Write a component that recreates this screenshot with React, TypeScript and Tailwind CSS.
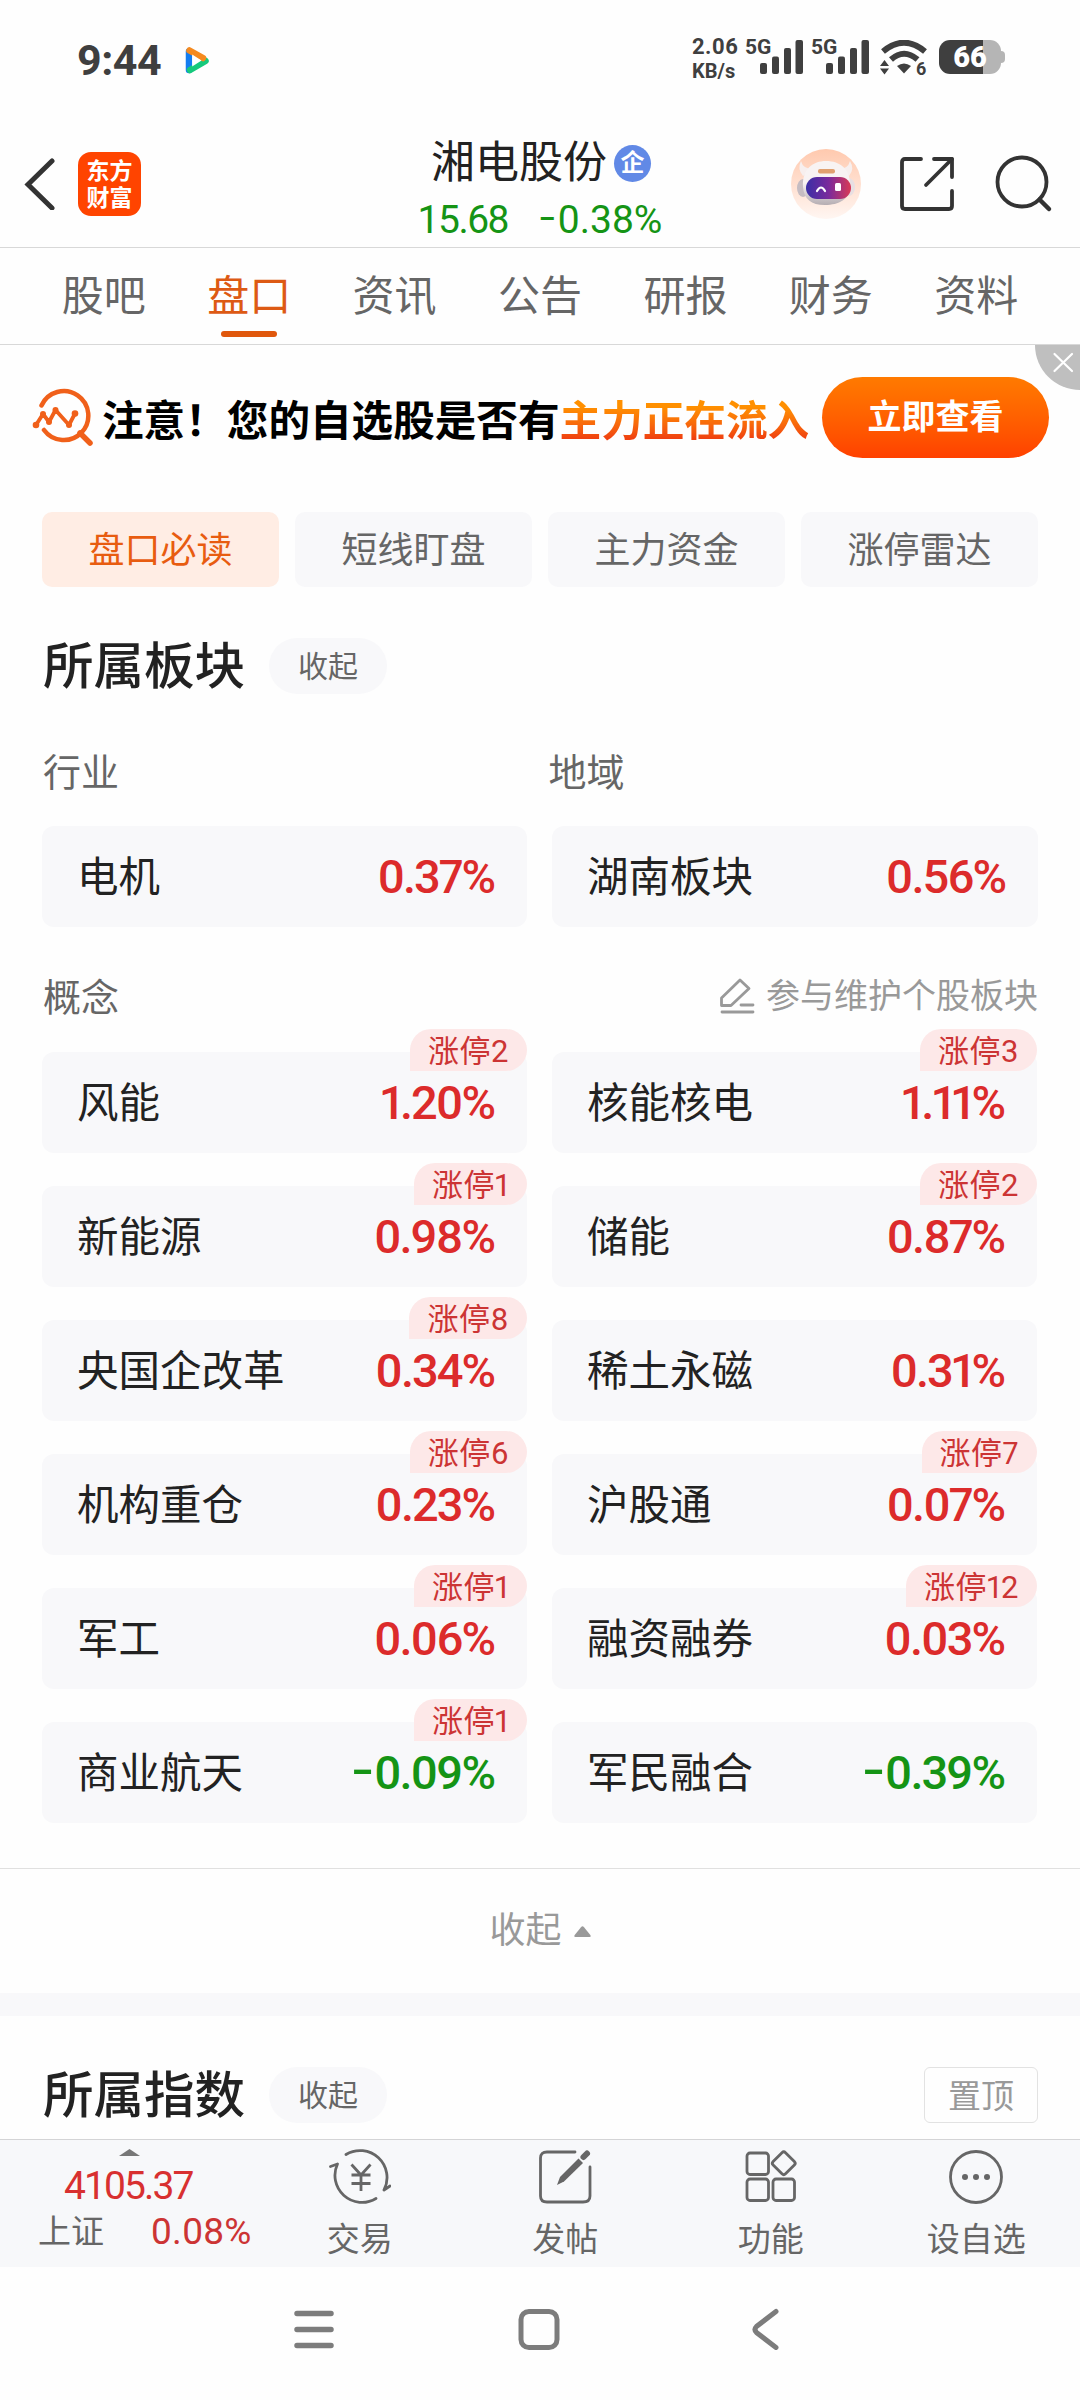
import type { ReactNode } from 'react';

interface Board {
  name: string;
  change: string;
  limitUp?: number;
}

const tabs = ['股吧', '盘口', '资讯', '公告', '研报', '财务', '资料'];

const chips = ['盘口必读', '短线盯盘', '主力资金', '涨停雷达'];

const baseBoards: Board[] = [
  { name: '电机', change: '0.37%' },
  { name: '湖南板块', change: '0.56%' },
];

const conceptBoards: Board[] = [
  { name: '风能', change: '1.20%', limitUp: 2 },
  { name: '核能核电', change: '1.11%', limitUp: 3 },
  { name: '新能源', change: '0.98%', limitUp: 1 },
  { name: '储能', change: '0.87%', limitUp: 2 },
  { name: '央国企改革', change: '0.34%', limitUp: 8 },
  { name: '稀土永磁', change: '0.31%' },
  { name: '机构重仓', change: '0.23%', limitUp: 6 },
  { name: '沪股通', change: '0.07%', limitUp: 7 },
  { name: '军工', change: '0.06%', limitUp: 1 },
  { name: '融资融券', change: '0.03%', limitUp: 12 },
  { name: '商业航天', change: '-0.09%', limitUp: 1 },
  { name: '军民融合', change: '-0.39%' },
];

// Widens the minus sign so it reads clearly next to the digits
function Change({ value }: { value: string }) {
  if (!value.startsWith('-')) return <>{value}</>;

  return (
    <>
      <span className="mr-[3px] inline-block origin-right -translate-y-[3px] scale-x-[1.4]">-</span>
      {value.slice(1)}
    </>
  );
}

function SignalBars() {
  return (
    <svg width="44" height="34" viewBox="0 0 44 34" fill="#3f3f3f">
      <rect x="0" y="23" width="7" height="11" rx="2" />
      <rect x="12" y="16.5" width="7" height="17.5" rx="2" />
      <rect x="24" y="8" width="7" height="26" rx="2" />
      <rect x="35.5" y="0" width="7.5" height="34" rx="2" />
    </svg>
  );
}

function WifiIcon() {
  return (
    <div className="relative h-[36px] w-[49px]">
      <svg width="49" height="36" viewBox="0 0 49 36">
        <g fill="none" stroke="#3f3f3f" strokeWidth="6">
          <path d="M3 11.500Q24 -6 45 11.500" />
          <path d="M11 19.500Q24 8 37.500 19.500" />
        </g>
        <path d="M17 26Q24 21 31 26L24 33.500Z" fill="#3f3f3f" />
        <path d="M0 26L4.500 20L9 26ZM0 28.500L4.500 34.500L9 28.500Z" fill="#3f3f3f" />
      </svg>
      <span className="absolute left-[36px] top-[19px] text-[18px] font-bold leading-[20px]">6</span>
    </div>
  );
}

function StatusBar() {
  return (
    <div className="flex h-[120px] items-center pl-[77px] pr-[75px] text-[#3f3f3f]">
      <span className="text-[43px] font-bold leading-none tracking-[-0.5px]">9:44</span>
      <svg className="ml-[17px] mt-px" width="37" height="37" viewBox="0 0 37 37">
        <path d="M11 9.500V28" stroke="#147df0" strokeWidth="6.500" strokeLinecap="round" />
        <path d="M12 28L27.500 19" stroke="#16c97c" strokeWidth="6.500" strokeLinecap="round" />
        <path d="M11.500 8.500L25 16" stroke="#f58a1f" strokeWidth="6.500" strokeLinecap="round" />
        <path d="M14.200 12.500V24.500L23.500 18.500Z" fill="#fff" />
      </svg>

      <div className="ml-auto mt-[2px] flex items-start">
        <div className="-mt-1 flex w-[53px] flex-col text-[22px] font-bold leading-[24px]">
          <span className="tracking-[0.5px]">2.06</span>
          <span className="text-[20px]">KB/s</span>
        </div>
        <span className="-mt-1 w-[15px] whitespace-nowrap text-[21px] font-bold leading-[24px]">5G</span>
        <div className="mt-[1px]"><SignalBars /></div>
        <span className="-mt-1 ml-[7px] w-[15px] whitespace-nowrap text-[21px] font-bold leading-[24px]">5G</span>
        <div className="mt-[1px]"><SignalBars /></div>
        <div className="ml-[10px] mt-[1px]"><WifiIcon /></div>
        <div className="ml-[10px] mt-[1px] flex items-center">
          <div className="flex h-[34px] w-[62px] items-center justify-center rounded-[11px] bg-[linear-gradient(90deg,#3f3f3f_0_44px,#b5b5b5_44px)] text-[29px] font-black leading-none text-white">
            66
          </div>
          <div className="h-3 w-[4px] rounded-r-md bg-[#b5b5b5]" />
        </div>
      </div>
    </div>
  );
}

function RobotAvatar() {
  return (
    <svg width="70" height="70" viewBox="0 0 70 70">
      <defs>
        <linearGradient id="robotBg" x1="0" y1="0" x2="0" y2="1">
          <stop offset="0" stopColor="#ffc9ae" />
          <stop offset="1" stopColor="#fff6f2" />
        </linearGradient>
        <linearGradient id="robotHead" x1="0" y1="0" x2="0" y2="1">
          <stop offset="0.500" stopColor="#f8f3f3" />
          <stop offset="1" stopColor="#b5adb2" />
        </linearGradient>
        <linearGradient id="robotVisor" x1="0" y1="0" x2="1" y2="0">
          <stop offset="0" stopColor="#3a2fa6" />
          <stop offset="0.500" stopColor="#7a2a9c" />
          <stop offset="1" stopColor="#d93a55" />
        </linearGradient>
      </defs>
      <circle cx="35" cy="35" r="35" fill="url(#robotBg)" />
      <path d="M10 12Q6 20 12 27L22 20Q12 20 10 12ZM59 12Q64 20 58 27L48 20Q57 20 59 12Z" fill="#f7efee" />
      <ellipse cx="12" cy="39" rx="6" ry="9" fill="#c5bcc2" />
      <ellipse cx="58" cy="38" rx="6" ry="9" fill="#e8dfe2" />
      <path d="M12 38C11 20 22 12 35 12C49 12 60 20 59 38C59 50 48 56 34 56C20 56 13 50 12 38Z" fill="url(#robotHead)" />
      <rect x="27" y="20" width="17" height="4.500" rx="2" fill="#e0a070" />
      <rect x="15" y="28" width="45" height="22" rx="11" fill="url(#robotVisor)" />
      <path d="M26 42Q30 35 34 42" fill="none" stroke="#fff" strokeWidth="2.200" strokeLinecap="round" />
      <rect x="44" y="34" width="6" height="8" rx="1.500" fill="#fff" />
    </svg>
  );
}

function Header() {
  return (
    <header className="flex h-[128px] border-b border-[#d8d8d8]">
      <div className="flex w-[300px] items-center pl-[23px]">
        <svg width="32" height="52" viewBox="0 0 32 52" fill="none" stroke="#333" strokeWidth="5">
          <path d="M29 3L5 26.500L29 50" strokeLinecap="round" />
        </svg>
        <div className="ml-[23px] flex h-[64px] w-[63px] flex-col items-center justify-center rounded-[13px] bg-[#ff4400] pt-[2px] text-[23px] font-bold leading-[27px] text-white">
          <span>东方</span>
          <span>财富</span>
        </div>
      </div>

      <div className="flex flex-1 flex-col items-center pt-[18px]">
        <div className="flex h-[50px] items-center gap-[7px] pl-[2px]">
          <span className="text-[44px] leading-none text-[#222]">湘电股份</span>
          <span className="flex h-[37px] w-[37px] items-center justify-center rounded-full bg-[#6189e6] text-[24px] font-bold leading-none text-white">
            企
          </span>
        </div>
        <div className="mt-2 flex h-[48px] items-center gap-[36px] text-[39px] leading-none text-[#159415]">
          <span className="tracking-[-1.5px]">15.68</span>
          <span className="whitespace-nowrap">
            <Change value="-0.38%" />
          </span>
        </div>
      </div>

      <div className="flex w-[300px] items-center justify-end pr-[27px]">
        <RobotAvatar />
        <svg className="ml-[38px]" width="56" height="56" viewBox="0 0 56 56" fill="none" stroke="#333" strokeWidth="3.800" strokeLinecap="round" strokeLinejoin="round">
          <path d="M22 3H6Q3 3 3 6V50Q3 53 6 53H50Q53 53 53 50V35" />
          <path d="M35 3H53V21" />
          <path d="M53 3L27 29" />
        </svg>
        <svg className="ml-[40px]" width="58" height="58" viewBox="0 0 58 58" fill="none" stroke="#333" strokeWidth="3.800" strokeLinecap="round">
          <circle cx="27" cy="27" r="24.500" />
          <path d="M44.500 44.500L54 54" strokeWidth="4.500" />
        </svg>
      </div>
    </header>
  );
}

function Banner() {
  return (
    <div className="relative flex h-[144px] items-center pl-[32px]">
      <svg width="62" height="60" viewBox="0 0 62 60" fill="none" stroke="#f0601a" strokeLinecap="round">
        <path d="M9.500 18.500A24.500 24.500 0 1 1 12 43" strokeWidth="4.500" />
        <path d="M48 46L58 56" strokeWidth="5.500" />
        <path d="M4 38L11 27L17 35L23.500 23L37 38L43 26.500" strokeWidth="3.800" strokeLinejoin="round" />
        <g fill="#f0601a" stroke="none">
          <circle cx="4" cy="38" r="3.300" />
          <circle cx="11" cy="27" r="3" />
          <circle cx="17" cy="35" r="3" />
          <circle cx="23.500" cy="23" r="3" />
          <circle cx="37" cy="38" r="3" />
          <circle cx="43" cy="26.500" r="3.300" />
        </g>
      </svg>
      <div className="ml-[8px] mt-[9px] w-[712px] whitespace-nowrap text-[41.6px] font-bold leading-[50px] text-black">
        注意！您的自选股是否有
        <span className="bg-gradient-to-b from-[#ff9000] from-20% to-[#f04010] to-85% bg-clip-text text-transparent">主力正在流入</span>
      </div>
      <button className="ml-[8px] h-[81px] w-[227px] rounded-full bg-gradient-to-b from-[#ff7a00] to-[#ff4000] text-[34px] font-bold leading-none text-white">
        立即查看
      </button>
      <button className="absolute right-0 top-0 h-[45px] w-[45px] rounded-bl-full bg-[#bfbfbf]">
        <svg width="45" height="45" viewBox="0 0 45 45" stroke="#fff" strokeWidth="2.200" strokeLinecap="round">
          <path d="M19.500 9L37 26M37 9L19.500 26" />
        </svg>
      </button>
    </div>
  );
}

function SectionTitle({ title, children }: { title: string; children?: ReactNode }) {
  return (
    <div className="mt-[51px] flex h-[56px] items-center pl-[43px] pr-[42px]">
      <h2 className="w-[204px] whitespace-nowrap pt-[3px] text-[50.5px] font-medium leading-none text-[#222]">{title}</h2>
      <button className="ml-[22px] h-[56px] w-[118px] rounded-full bg-[#f8f8fa] pt-[2px] text-[30px] leading-none text-[#666]">
        收起
      </button>
      {children}
    </div>
  );
}

function BoardCard({ board }: { board: Board }) {
  const down = board.change.startsWith('-');

  return (
    <div className="relative flex h-[101px] items-center justify-between rounded-xl bg-[#f8f8fa] pl-[35px] pr-[33px]">
      <span className="pt-[2px] text-[41.5px] leading-none text-[#222]">{board.name}</span>
      <span
        className={`text-[47px] font-medium leading-none tracking-[-2px] proportional-nums ${
          down ? 'text-[#159415]' : 'text-[#dc2b2b]'
        }`}
      >
        <Change value={board.change} />
      </span>
      {board.limitUp && (
        <span className="absolute -top-[23px] right-0 flex h-[42px] items-center rounded-full rounded-bl-none bg-[#fde8e8] pl-[18px] pr-[18px] pt-[2px] text-[31px] leading-none tracking-[0.5px] text-[#cc3434] proportional-nums">
          涨停{board.limitUp}
        </span>
      )}
    </div>
  );
}

function BottomItem({ label, children }: { label: string; children: ReactNode }) {
  return (
    <div className="flex w-[205.5px] flex-col items-center pt-[8px] text-[#666]">
      <svg width="62" height="58" viewBox="0 0 62 58" fill="none" stroke="#666" strokeWidth="2.800" strokeLinecap="round" strokeLinejoin="round">
        {children}
      </svg>
      <span className="mt-[17px] text-[33px] leading-none">{label}</span>
    </div>
  );
}

function BottomBar() {
  return (
    <div className="mt-4 flex h-[128px] border-t border-[#d4d4d6] bg-[#f7f8fa]">
      <div className="flex w-[257px] flex-col pt-[9px] leading-none">
        <svg className="ml-[119px]" width="21" height="7" viewBox="0 0 21 7" fill="#777">
          <path d="M0 7L10.500 0L21 7Z" />
        </svg>
        <span className="ml-[64px] mt-[11px] text-[39px] tracking-[-1.9px] text-[#d83030]">4105.37</span>
        <div className="mt-[7px] flex items-center">
          <span className="ml-[38px] text-[33px] text-[#666]">上证</span>
          <span className="ml-[47px] text-[37px] tracking-[0.3px] text-[#cc3434]">0.08%</span>
        </div>
      </div>
      <BottomItem label="交易">
        <path d="M17 6.500A27 27 0 0 1 55 42L61 38" />
        <path d="M47 50.500A27 27 0 0 1 8.500 16L1.500 18.500" />
        <path d="M22.500 16.500L32 27L41.500 16.500M32 27V43M22.500 27H41.500M22.500 35.500H41.500" strokeLinecap="butt" />
      </BottomItem>
      <BottomItem label="发帖">
        <path d="M41 4H13Q6.500 4 6.500 10V48Q6.500 54 13 54H49Q56 54 56 48V19" />
        <path d="M49.500 9L53 5.500" strokeWidth="6" />
        <path d="M23 37L26 29L44.500 10.500L49 15L30 33.500Z" fill="#666" stroke="none" />
      </BottomItem>
      <BottomItem label="功能">
        <rect x="7" y="5" width="21.500" height="21.500" rx="3" />
        <rect x="7" y="31" width="21.500" height="21.500" rx="3" />
        <rect x="33" y="31" width="21.500" height="21.500" rx="3" />
        <rect x="35" y="6.500" width="17.500" height="17.500" rx="2.500" transform="rotate(45 43.750 15.250)" />
      </BottomItem>
      <BottomItem label="设自选">
        <circle cx="31" cy="29" r="25.500" />
        <g fill="#666" stroke="none">
          <circle cx="20" cy="29" r="3" />
          <circle cx="31" cy="29" r="3" />
          <circle cx="42" cy="29" r="3" />
        </g>
      </BottomItem>
    </div>
  );
}

function SystemNav() {
  return (
    <div className="flex h-[133px] items-start pl-[294px] pt-[41px]">
      <svg width="40" height="42" viewBox="0 0 40 42" stroke="#7c7c7c" strokeWidth="5.500" strokeLinecap="round">
        <path d="M3 5.500H37M3 21.500H37M3 37.500H37" />
      </svg>
      <svg className="ml-[183px]" width="44" height="42" viewBox="0 0 44 42" fill="none" stroke="#7c7c7c" strokeWidth="5">
        <rect x="4" y="3.500" width="36" height="36" rx="8" />
      </svg>
      <svg className="ml-[190px]" width="28" height="42" viewBox="0 0 28 42" fill="none" stroke="#7c7c7c" strokeWidth="5" strokeLinecap="round">
        <path d="M25 3.500L5.500 18.500Q2.500 21.500 5.500 24.500L25 39.500" />
      </svg>
    </div>
  );
}

export default function App() {
  return (
    <div className="h-[2400px] w-[1080px] overflow-hidden bg-[#fefefe] font-[Roboto,'Noto_Sans_CJK_SC',sans-serif]">
      <StatusBar />
      <Header />

      {/* Tabs */}
      <nav className="flex h-[97px] border-b border-[#d8d8d8] px-[31px]">
        {tabs.map((tab) => (
          <div key={tab} className="flex flex-1 flex-col items-center">
            <span
              className={`flex h-[83px] items-center pt-[15px] text-[42px] leading-none ${
                tab === '盘口' ? 'text-[#dd5a14]' : 'text-[#666]'
              }`}
            >
              {tab}
            </span>
            {tab === '盘口' && <span className="h-[6px] w-[56px] rounded-full bg-[#e0570c]" />}
          </div>
        ))}
      </nav>

      <Banner />

      {/* Filter chips */}
      <div className="mt-[23px] grid grid-cols-4 gap-4 px-[42px]">
        {chips.map((chip, index) => (
          <button
            key={chip}
            className={`h-[75px] rounded-[10px] pt-[2px] text-[36px] leading-none ${
              index === 0 ? 'bg-[#ffede4] text-[#e85c10]' : 'bg-[#f8f8fa] text-[#666]'
            }`}
          >
            {chip}
          </button>
        ))}
      </div>

      {/* Boards */}
      <SectionTitle title="所属板块" />
      <div className="mt-[59px] grid h-10 grid-cols-2 items-center pl-[43px] text-[38px] leading-none text-[#666]">
        <span>行业</span>
        <span className="-ml-[13px]">地域</span>
      </div>
      <div className="mt-[33px] grid grid-cols-[485px_486px] gap-x-[25px] px-[42px]">
        {baseBoards.map((board) => (
          <BoardCard key={board.name} board={board} />
        ))}
      </div>

      <div className="mt-[51px] flex h-10 items-center pl-[43px] pr-[42px]">
        <span className="text-[38px] leading-none text-[#666]">概念</span>
        <svg className="-mt-1 ml-auto" width="36" height="36" viewBox="0 0 36 36" fill="none" stroke="#999" strokeWidth="2.800" strokeLinecap="round" strokeLinejoin="round">
          <path d="M2.500 27.500V20L21 2L30 10.500L12 27.500Z" />
          <path d="M22 27H34M3 34H34" />
        </svg>
        <span className="-mt-[4px] ml-[11px] text-[34px] leading-none text-[#999]">参与维护个股板块</span>
      </div>
      <div className="mt-[34px] grid grid-cols-[485px_485px] gap-x-[25px] gap-y-[33px] px-[42px]">
        {conceptBoards.map((board) => (
          <BoardCard key={board.name} board={board} />
        ))}
      </div>

      <button className="mt-[45px] flex h-[125px] w-full items-center justify-center gap-[12px] border-t border-[#e0e0e0] text-[36px] leading-none text-[#999]">
        收起
        <svg width="17" height="11" viewBox="0 0 17 11" fill="#999">
          <path d="M1.500 11Q-0.500 11 0.700 9L7 1.200Q8.500 -0.600 10 1.200L16.300 9Q17.500 11 15.500 11Z" />
        </svg>
      </button>
      <div className="h-[23px] bg-[#f8f8fa]" />

      {/* Indexes */}
      <SectionTitle title="所属指数">
        <button className="ml-auto h-[56px] w-[114px] rounded-md border border-[#e2e2e2] pt-[2px] text-[33px] leading-none text-[#999]">
          置顶
        </button>
      </SectionTitle>

      <BottomBar />
      <SystemNav />
    </div>
  );
}
